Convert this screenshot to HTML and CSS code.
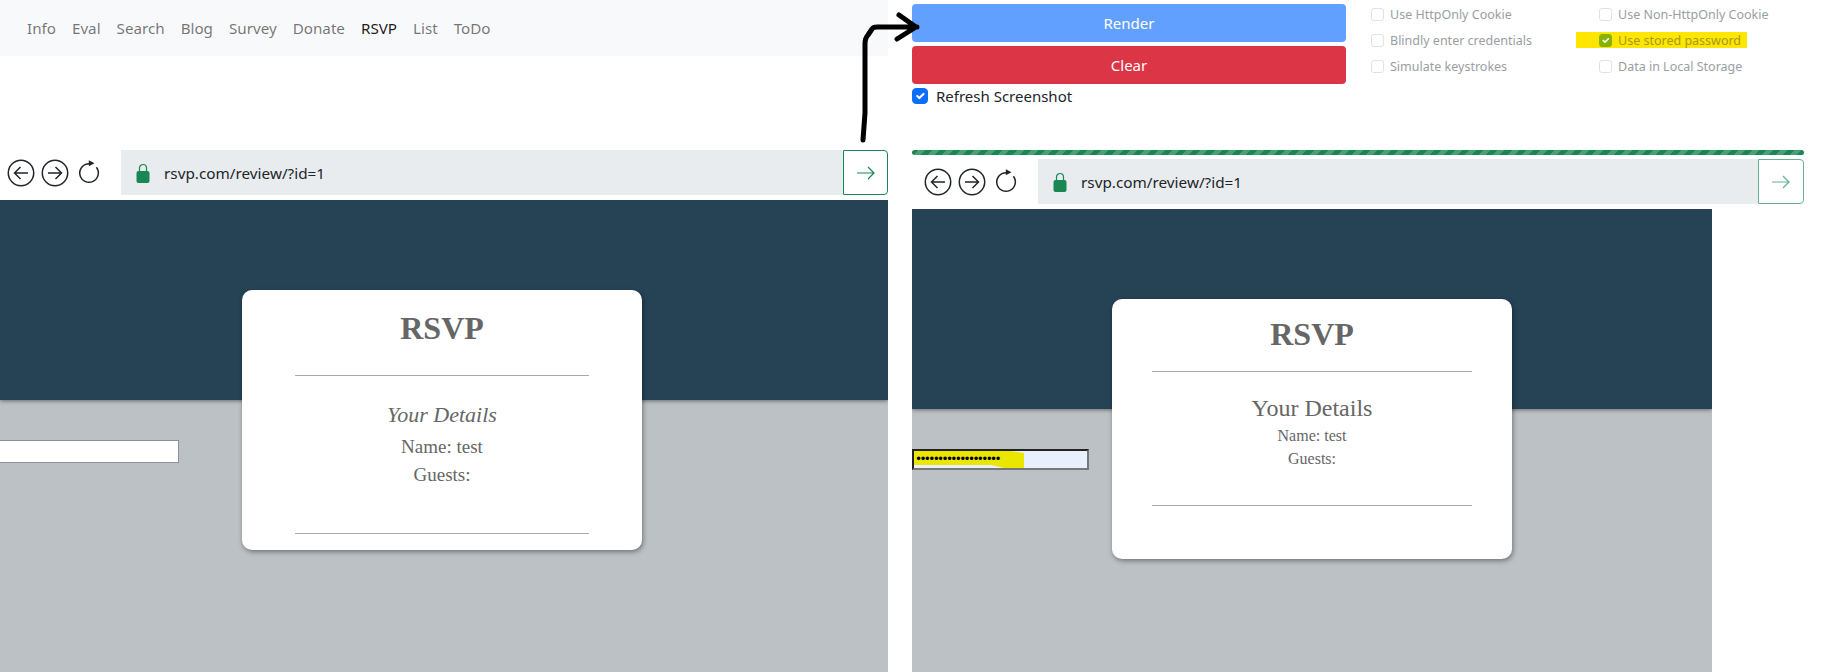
FILE: index.html
```html
<!DOCTYPE html>
<html lang="en">
<head>
    <meta charset="UTF-8">
    <title>RSVP</title>
    <link rel="stylesheet" href="styles.css">
</head>
<body>
    <section class="panel panel-left">
        <nav class="topnav">
            <a href="#">Info</a>
            <a href="#">Eval</a>
            <a href="#">Search</a>
            <a href="#">Blog</a>
            <a href="#">Survey</a>
            <a href="#">Donate</a>
            <a href="#" class="active">RSVP</a>
            <a href="#">List</a>
            <a href="#">ToDo</a>
        </nav>
        <div class="urlrow">
            <div class="browser-btns">
                <svg class="icon" viewBox="0 0 28 28"><circle cx="14" cy="14" r="12.7"/><path d="M21 14H7.5M13.5 8l-6 6 6 6"/></svg>
                <svg class="icon" viewBox="0 0 28 28"><circle cx="14" cy="14" r="12.7"/><path d="M7 14h13.5M14.5 8l6 6-6 6"/></svg>
                <svg class="icon reload" viewBox="0 0 28 28"><path d="M14 4.7a9.3 9.3 0 1 0 7.4 3.6"/><path class="solid" d="M13.8 1.3l5.7 3-5.7 3z"/></svg>
            </div>
            <div class="urlbar">
                <svg class="lock" viewBox="0 0 14 20"><path class="shackle" d="M3.5 10V5a3.5 3.5 0 0 1 7 0v5"/><rect x="0.5" y="8" width="13" height="12" rx="2"/></svg>
                <span>rsvp.com/review/?id=1</span>
            </div>
            <button class="go"><svg viewBox="0 0 20 20"><path d="M1 10h17M12 4l6 6-6 6"/></svg></button>
        </div>
        <div class="site site-left">
            <div class="hero"></div>
            <div class="lower">
                <input class="pw pw-left" type="text">
            </div>
            <div class="card">
                <h1>RSVP</h1>
                <hr>
                <h2>Your Details</h2>
                <p>Name: test</p>
                <p>Guests:</p>
                <hr class="hr-end">
            </div>
        </div>
    </section>

    <section class="panel panel-right">
        <div class="controls">
            <div class="actions">
                <button class="btn btn-render">Render</button>
                <button class="btn btn-clear">Clear</button>
                <label class="refresh"><input type="checkbox" checked> Refresh Screenshot</label>
            </div>
            <div class="options">
                <label class="opt"><input type="checkbox" disabled>Use HttpOnly Cookie</label>
                <label class="opt"><input type="checkbox" disabled>Use Non-HttpOnly Cookie</label>
                <label class="opt"><input type="checkbox" disabled>Blindly enter credentials</label>
                <label class="opt marked"><input type="checkbox" checked disabled>Use stored password</label>
                <label class="opt"><input type="checkbox" disabled>Simulate keystrokes</label>
                <label class="opt"><input type="checkbox" disabled>Data in Local Storage</label>
            </div>
        </div>
        <div class="progress"></div>
        <div class="urlrow urlrow-right">
            <div class="browser-btns">
                <svg class="icon" viewBox="0 0 28 28"><circle cx="14" cy="14" r="12.7"/><path d="M21 14H7.5M13.5 8l-6 6 6 6"/></svg>
                <svg class="icon" viewBox="0 0 28 28"><circle cx="14" cy="14" r="12.7"/><path d="M7 14h13.5M14.5 8l6 6-6 6"/></svg>
                <svg class="icon reload" viewBox="0 0 28 28"><path d="M14 4.7a9.3 9.3 0 1 0 7.4 3.6"/><path class="solid" d="M13.8 1.3l5.7 3-5.7 3z"/></svg>
            </div>
            <div class="urlbar">
                <svg class="lock" viewBox="0 0 14 20"><path class="shackle" d="M3.5 10V5a3.5 3.5 0 0 1 7 0v5"/><rect x="0.5" y="8" width="13" height="12" rx="2"/></svg>
                <span>rsvp.com/review/?id=1</span>
            </div>
            <button class="go go-faded"><svg viewBox="0 0 20 20"><path d="M1 10h17M12 4l6 6-6 6"/></svg></button>
        </div>
        <div class="site site-right">
            <div class="hero"></div>
            <div class="lower">
                <div class="pw pw-right">
                    <span class="scribble"></span>
                    <span class="dots">&bull;&bull;&bull;&bull;&bull;&bull;&bull;&bull;&bull;&bull;&bull;&bull;&bull;&bull;&bull;&bull;&bull;&bull;&bull;</span>
                </div>
            </div>
            <div class="card">
                <h1>RSVP</h1>
                <hr>
                <h2>Your Details</h2>
                <p>Name: test</p>
                <p>Guests:</p>
                <hr class="hr-end">
            </div>
        </div>
    </section>

    <!-- hand drawn arrow on top of the screenshot -->
    <svg class="arrow" viewBox="0 0 70 140"><path d="M4 128l2-27V32q0-6 3-9l4-6q1-2 5-2h40M40 3l17 12-19 12"/></svg>
</body>
</html>
```

FILE: styles.css
```css
* {
    box-sizing: border-box;
}
html, body {
    height: 100%;
}
body {
    margin: 0;
    display: flex;
    gap: 24px;
    background: #fff;
    color: #212529;
    font-family: "Noto Sans", sans-serif;
    font-size: 15px;
    overflow: hidden;
}
.panel {
    display: flex;
    flex-direction: column;
    height: 672px;
}
.panel-left {
    width: 888px;
}
.panel-right {
    width: 892px;
}

/* top nav */
.topnav {
    display: flex;
    align-items: center;
    height: 56px;
    padding-left: 19px;
    margin-bottom: 94px;
    background: #f8f9fa;
    font-size: 15.2px;
}
.topnav a {
    padding: 0 8px;
    color: rgba(0, 0, 0, .55);
    text-decoration: none;
}
.topnav a.active {
    color: rgba(0, 0, 0, .9);
}

/* fake browser bar */
.urlrow {
    display: flex;
    height: 45px;
    flex: none;
}
.urlrow-right {
    margin-top: 4px;
}
.browser-btns {
    display: flex;
    align-items: center;
    gap: 6px;
    width: 121px;
    padding-left: 7px;
    flex: none;
}
.urlrow-right .browser-btns {
    width: 126px;
    padding-left: 12px;
}
.icon {
    width: 28px;
    height: 28px;
    fill: none;
    stroke: #212529;
    stroke-width: 1.5;
}
.icon .solid {
    fill: #212529;
    stroke: none;
}
.urlbar {
    display: flex;
    align-items: center;
    flex: 1;
    gap: 14px;
    padding-left: 15px;
    background: #e9ecef;
    font-size: 15.3px;
}
.lock {
    width: 14px;
    height: 20px;
    fill: #198754;
}
.lock .shackle {
    fill: none;
    stroke: #198754;
    stroke-width: 1.2;
}
.go {
    width: 45px;
    height: 45px;
    padding: 0;
    display: flex;
    align-items: center;
    justify-content: center;
    background: #fff;
    border: 1px solid #198754;
    border-radius: 0 4px 4px 0;
}
.go svg {
    width: 20px;
    height: 20px;
    fill: none;
    stroke: #198754;
    stroke-width: 1.2;
}
.go-faded {
    width: 46px;
    opacity: .65;
}

/* the rendered page */
.site {
    position: relative;
    display: flex;
    flex-direction: column;
    flex: 1;
    margin-top: 5px;
    font-family: "Liberation Serif", serif;
    color: #666;
    overflow: hidden;
}
.site-right {
    width: 800px;
}
.hero {
    height: 200px;
    flex: none;
    background: #264356;
    box-shadow: 0 1px 4px rgba(0, 0, 0, .45);
    z-index: 1;
}
.lower {
    flex: 1;
    background: #bcc1c5;
}
.pw {
    display: block;
    height: 23px;
    margin-top: 40px;
    background: #fff;
    border: 1px solid #8f8f9d;
}
.pw-left {
    width: 181px;
    margin-left: -2px;
}
.pw-right {
    position: relative;
    width: 177px;
    height: 21px;
    border-width: 2px;
    border-style: solid;
    border-color: #222 #777 #777 #222;
    background: #e8f0fe;
}
.scribble {
    position: absolute;
    left: 0;
    top: 0;
    bottom: 0;
    width: 110px;
    background: #ebe600;
    clip-path: polygon(0 0, 88% 0, 100% 12%, 100% 100%, 82% 100%, 70% 82%, 0 82%);
}
.dots {
    position: absolute;
    left: 1px;
    top: 0;
    line-height: 17px;
    font-family: "DejaVu Sans", sans-serif;
    font-size: 12px;
    letter-spacing: -2.66px;
    color: #000;
}
.card {
    position: absolute;
    z-index: 2;
    left: 242px;
    top: 90px;
    width: 400px;
    height: 260px;
    padding: 0 53px;
    text-align: center;
    background: #fff;
    border-radius: 10px;
    box-shadow: 1px 2px 5px rgba(0, 0, 0, .4);
}
.card h1 {
    margin: 0;
    padding-top: 17px;
    font-size: 32px;
    line-height: 42px;
}
.card hr {
    margin: 0;
    border: 0;
    border-top: 1px solid #aaa;
}
.card h2 {
    margin: 0;
}
.card p {
    margin: 0;
}
.site-left .card hr {
    margin-top: 26px;
}
.site-left .card h2 {
    margin-top: 25px;
    font-size: 22px;
    font-style: italic;
    font-weight: normal;
    line-height: 28px;
}
.site-left .card p {
    font-size: 19px;
    line-height: 28px;
}
.site-left .card h2 + p {
    margin-top: 4px;
}
.site-left .card .hr-end {
    margin-top: 44px;
}
.site-right .card {
    left: 200px;
    padding: 0 40px;
}
.site-right .card h1 {
    padding-top: 14px;
}
.site-right .card hr {
    margin-top: 16px;
}
.site-right .card h2 {
    margin-top: 20px;
    font-size: 24px;
    font-weight: normal;
    line-height: 32px;
}
.site-right .card p {
    font-size: 16px;
    line-height: 23px;
}
.site-right .card .hr-end {
    margin-top: 35px;
}

/* render controls */
.controls {
    display: flex;
    height: 150px;
    flex: none;
}
.actions {
    display: flex;
    flex-direction: column;
    flex: none;
    width: 434px;
    padding-top: 4px;
    gap: 4px;
}
.btn {
    height: 38px;
    border: 0;
    border-radius: 4px;
    color: #fff;
    font: inherit;
}
.btn-render {
    background: #62a0ff;
}
.btn-clear {
    background: #dc3545;
}
.refresh {
    display: flex;
    align-items: center;
    gap: 8px;
    height: 16px;
}
input[type="checkbox"] {
    appearance: none;
    width: 16px;
    height: 16px;
    margin: 0;
    flex: none;
    background: #fff;
    border: 1px solid #c5c8cb;
    border-radius: 4px;
}
input[type="checkbox"]:checked {
    background: #0d6efd url("data:image/svg+xml,%3Csvg xmlns='http://www.w3.org/2000/svg' viewBox='0 0 20 20'%3E%3Cpath fill='none' stroke='white' stroke-width='3' stroke-linecap='round' stroke-linejoin='round' d='M6 10l3 3 6-6'/%3E%3C/svg%3E") center/contain no-repeat;
    border-color: #0d6efd;
}
.options {
    display: grid;
    flex: none;
    grid-template-columns: 228px auto;
    grid-auto-rows: 26px;
    margin-left: 25px;
    padding-top: 1px;
    font-size: 12.5px;
    color: #9a9ea2;
}
.opt {
    display: flex;
    align-items: center;
    gap: 6px;
    justify-self: start;
}
.opt input[type="checkbox"] {
    width: 13px;
    height: 13px;
    border-color: #dfe1e3;
    border-radius: 3px;
}
.marked {
    height: 16px;
    align-self: center;
    margin-left: -23px;
    padding: 0 6px 0 23px;
    background: #ffe600;
    color: #a39a18;
}
.opt.marked input[type="checkbox"]:checked {
    background-color: #86b300;
    border-color: #86b300;
}
.progress {
    height: 5px;
    flex: none;
    border-radius: 3px;
    background: repeating-linear-gradient(-45deg, #198754 0 5px, #4a9f76 5px 10px);
}

/* annotation */
.arrow {
    position: absolute;
    left: 859px;
    top: 12px;
    width: 70px;
    height: 140px;
    fill: none;
    stroke: #000;
    stroke-width: 5;
    stroke-linecap: round;
    stroke-linejoin: round;
    z-index: 3;
}
```
